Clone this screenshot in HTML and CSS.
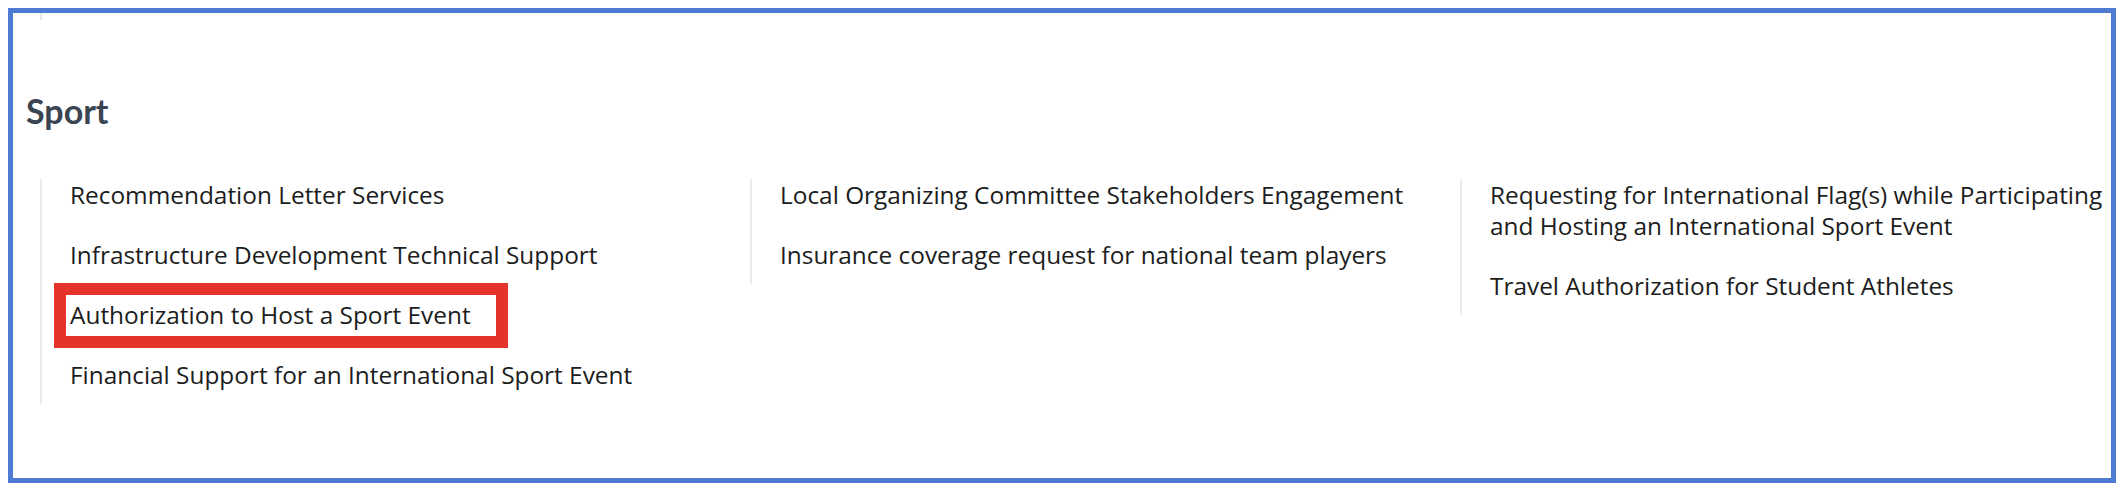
FILE: index.html
```html
<!DOCTYPE html>
<html lang="en">
<head>
<meta charset="utf-8">
<title>Sport services</title>
<link rel="stylesheet" href="styles.css">
</head>
<body>
<section class="frame">
  <div class="tick"></div>
  <h2 class="section-title">Sport</h2>
  <div class="columns">
    <ul class="col">
      <li class="item">Recommendation Letter Services</li>
      <li class="item">Infrastructure Development Technical Support</li>
      <li class="item item-marked">Authorization to Host a Sport Event</li>
      <li class="item">Financial Support for an International Sport Event</li>
    </ul>
    <ul class="col">
      <li class="item">Local Organizing Committee Stakeholders Engagement</li>
      <li class="item">Insurance coverage request for national team players</li>
    </ul>
    <ul class="col">
      <li class="item">Requesting for International Flag(s) while Participating and Hosting an International Sport Event</li>
      <li class="item">Travel Authorization for Student Athletes</li>
    </ul>
  </div>
</section>
</body>
</html>
```
FILE: styles.css
```css
html, body {
  background: #ffffff;
}
body {
  margin: 8px 10px 9px 8px;
}
.frame {
  box-sizing: border-box;
  height: 475px;
  border: 5px solid #4f7bd5;
  background: #ffffff;
  overflow: hidden;
}
.tick {
  width: 2px;
  height: 7px;
  margin-left: 27px;
  background: #e4e9ef;
}
.section-title {
  margin: 70px 0 0 13px;
  font-family: Lato, "Open Sans", sans-serif;
  font-weight: 700;
  font-size: 34px;
  line-height: 41px;
  color: #3b4451;
}
.columns {
  display: grid;
  grid-template-columns: 710px 710px 1fr;
  align-items: start;
  margin: 48px 0 0 27px;
}
.col {
  list-style: none;
  margin: 0;
  padding: 0 0 14px 28px;
  border-left: 2px solid #e8ecf1;
  display: flex;
  flex-direction: column;
  gap: 29px;
}
.item {
  font-family: "Open Sans", Lato, sans-serif;
  font-size: 24.4px;
  line-height: 31px;
  color: #1c1d20;
}
.item-marked {
  position: relative;
}
.item-marked::after {
  content: "";
  position: absolute;
  left: -16px;
  top: -16px;
  width: 454px;
  height: 65px;
  box-sizing: border-box;
  border: 12px solid #e5322a;
  pointer-events: none;
}
```
